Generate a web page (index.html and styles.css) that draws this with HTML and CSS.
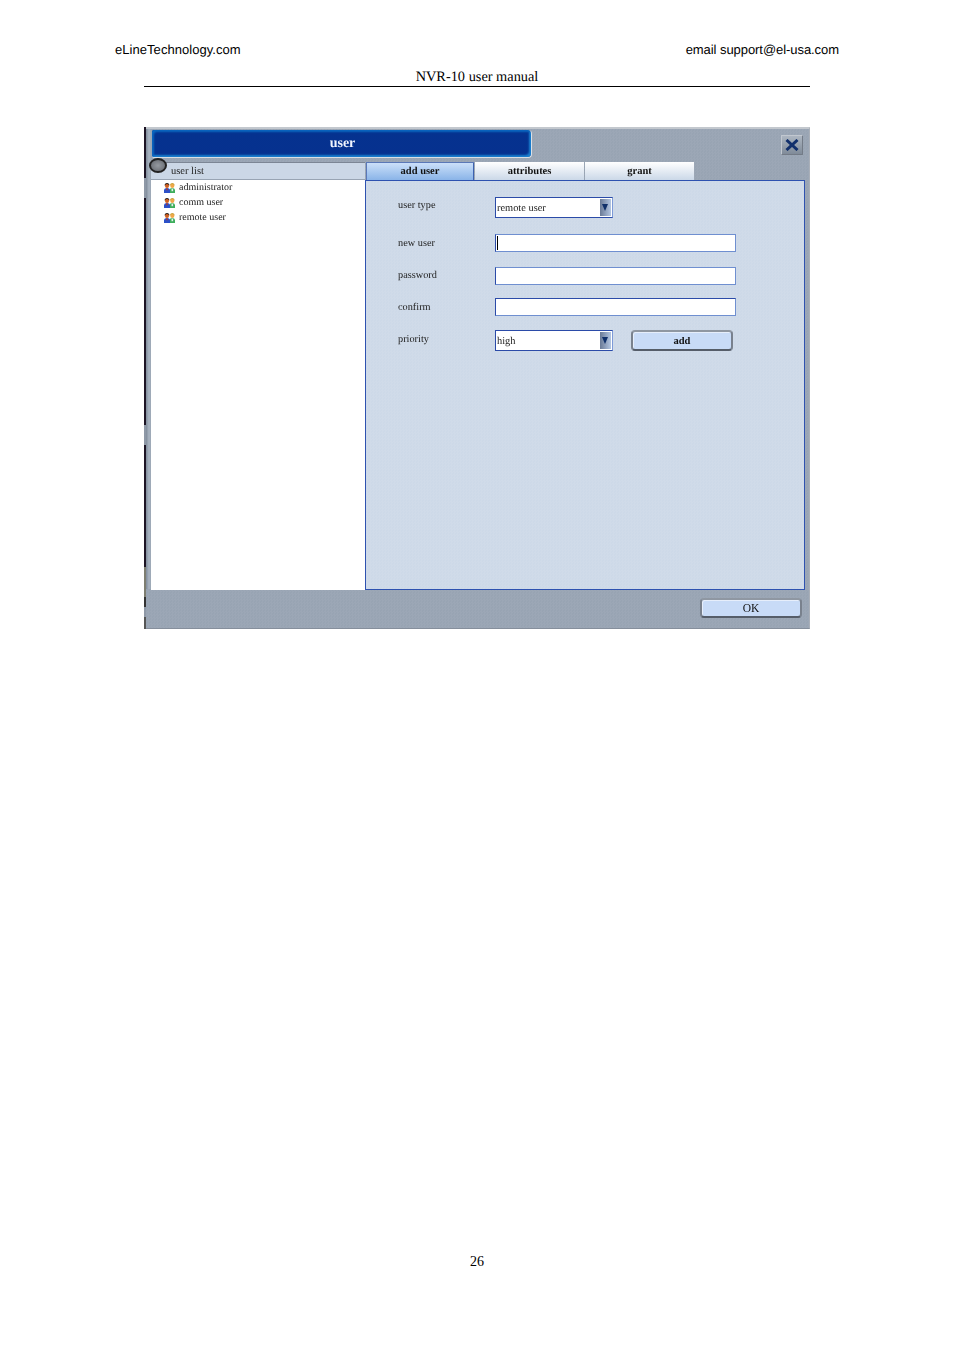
FILE: index.html
```html
<!DOCTYPE html>
<html lang="en">
<head>
<meta charset="utf-8">
<title>NVR-10 user manual</title>
<link rel="stylesheet" href="styles.css">
</head>
<body>
<header class="doc-head">
  <div class="doc-contact"><span class="site">eLineTechnology.com</span><span class="mail">email support@el-usa.com</span></div>
  <div class="doc-title">NVR-10 user manual</div>
</header>
<main class="dialog">
  <div class="title-row">
    <div class="title-bar">user</div>
    <button class="close" aria-label="close">
      <svg viewBox="0 0 14 12" width="14" height="12"><path d="M1.5 1 L12.5 11 M12.5 1 L1.5 11" stroke="#12306c" stroke-width="3" fill="none"/></svg>
    </button>
  </div>
  <div class="body-row">
    <aside class="users">
      <span class="knob"></span>
      <div class="users-head">user list</div>
      <ul class="users-list">
        <li><svg class="uicon" viewBox="0 0 11 10" width="11" height="10"><use href="#group"/></svg>administrator</li>
        <li><svg class="uicon" viewBox="0 0 11 10" width="11" height="10"><use href="#group"/></svg>comm user</li>
        <li><svg class="uicon" viewBox="0 0 11 10" width="11" height="10"><use href="#group"/></svg>remote user</li>
      </ul>
    </aside>
    <section class="main">
      <nav class="tabs">
        <div class="tab active">add user</div>
        <div class="tab">attributes</div>
        <div class="tab">grant</div>
      </nav>
      <div class="panel">
        <div class="row row-type">
          <label>user type</label>
          <div class="select"><span>remote user</span><i class="arrow"></i></div>
        </div>
        <div class="row row-input row-new">
          <label>new user</label>
          <div class="input"><span class="caret"></span></div>
        </div>
        <div class="row row-input row-pass">
          <label>password</label>
          <div class="input"></div>
        </div>
        <div class="row row-input row-confirm">
          <label>confirm</label>
          <div class="input"></div>
        </div>
        <div class="row row-priority">
          <label>priority</label>
          <div class="select"><span>high</span><i class="arrow"></i></div>
          <button class="btn btn-add">add</button>
        </div>
      </div>
    </section>
  </div>
  <div class="foot-row"><button class="btn btn-ok">OK</button></div>
</main>
<footer class="page-num">26</footer>
<svg class="defs" width="0" height="0" aria-hidden="true">
  <defs>
    <g id="group">
      <path d="M6 2.6 A2.3 2.6 0 0 1 10.6 2.6Z" fill="#c9a23c"/>
      <circle cx="8.3" cy="3" r="2" fill="#f0a848"/>
      <path d="M5.4 10 V6.8 Q5.8 5.1 8.2 5.1 Q10.6 5.1 11 6.8 V10Z" fill="#3fae5c"/>
      <rect x="7.5" y="5.6" width="1.6" height="2.6" fill="#dfeeea"/>
      <path d="M0.6 2.6 A2.4 2.6 0 0 1 5.4 2.6Z" fill="#2a1c18"/>
      <circle cx="3" cy="3.1" r="2" fill="#d2601e"/>
      <path d="M0 10 V6.8 Q0.4 5.1 3 5.1 Q5.6 5.1 6 6.8 V10Z" fill="#2c50c8"/>
      <rect x="2.2" y="5.4" width="1.6" height="1.8" fill="#b03828"/>
    </g>
  </defs>
</svg>
</body>
</html>
```
FILE: styles.css
```css
* { box-sizing: border-box; }
html, body { margin: 0; padding: 0; background: #fff; }
body { width: 954px; height: 1350px; font-family: "Liberation Serif", serif; color: #111; overflow: hidden; position: relative; }

.doc-head { padding: 42px 115px 0; }
.doc-contact { display: flex; justify-content: space-between; font: 13px/16px "Liberation Sans", sans-serif; color: #000; text-rendering: geometricPrecision; }
.site { letter-spacing: .05px; }
.mail { letter-spacing: -.06px; }
.doc-title { margin: 11px 29px 0; height: 18px; border-bottom: 1px solid #000; text-align: center; font: 14.35px/16px "Liberation Serif", serif; color: #000; text-rendering: geometricPrecision; }

.dialog {
  width: 666px; height: 502px; margin: 40px 0 0 144px;
  background: #98a4b3 repeating-conic-gradient(rgba(255,255,255,.035) 0 25%, transparent 0 50%) 0 0 / 3px 3px;
  border-top: 2px solid #c3c8ce;
  border-bottom: 1px solid #868f9c;
  border-right: 1px solid #a9afb8;
  display: flex; flex-direction: column;
  position: relative;
  filter: blur(.3px);
  text-rendering: geometricPrecision;
}
.dialog::before { content: ""; position: absolute; left: 0; top: -2px; bottom: -1px; width: 2px;
  background: linear-gradient(#1c1424 0 51px, #8e98a6 51px 71px, #1c1424 71px 298px, #8e98a6 298px 318px, #1c1424 318px 440px, #7d7d70 440px 470px, #333 470px 480px, #8e98a6 480px 490px, #555 490px 100%); }
.dialog::after { content: ""; position: absolute; left: 2px; top: 0; bottom: 39px; width: 5px; background: linear-gradient(90deg, #7f8b9a, #aab5c2 60%, #9aa6b4); }

.title-row { height: 33px; flex: none; display: flex; justify-content: space-between; padding: 1px 6px 0 8px; }
.title-bar {
  width: 380px; height: 28px; border-radius: 2px 4px 4px 2px;
  background: linear-gradient(#05328f, #06318f);
  border-bottom: 1px solid #dbe0e6;
  border-right: 1px solid #dbe0e6;
  box-shadow: inset 3px 3px 2px -1px #0a66c0, inset -3px -3px 2px -1px #1a80d0;
  color: #f2f6ff; font: bold 14px/28px "Liberation Serif", serif; text-align: center; padding-left: 2px;
}
.close {
  width: 22px; height: 20px; margin-top: 5px; padding: 0; display: flex; align-items: center; justify-content: center;
  background: linear-gradient(#adb6c1, #808b99);
  border: 1px solid #737b87; border-top-color: #c2c8d0; border-left-color: #c2c8d0; border-radius: 1px;
}

.body-row { display: flex; flex: none; height: 428px; padding-left: 7px; padding-right: 5px; position: relative; z-index: 1; }
.users { width: 214px; flex: none; position: relative; display: flex; flex-direction: column; border-top: 1px solid #7c8695; }
.knob { position: absolute; left: -2px; top: -5px; width: 18px; height: 15px; border-radius: 50%; background: radial-gradient(#959aa0, #62666c); border: 2.5px solid #222; }
.users-head { height: 17px; padding-left: 20px; background: #cbd7e6; border-bottom: 1px solid #98a4b3; font-size: 10.5px; line-height: 18px; color: #222; }
.users-list { flex: 1; margin: 0; padding: 0 0 0 13px; list-style: none; background: #fff; }
.users-list li { height: 15px; display: flex; align-items: center; gap: 4px; font-size: 10px; line-height: 13px; color: #222; }
.uicon { flex: none; }

.main { width: 440px; flex: none; display: flex; flex-direction: column; }
.tabs { height: 18px; display: flex; gap: 1px; padding-left: 1px; flex: none; }
.tab { width: 109px; height: 18px; text-align: center; font: bold 10.5px/20px "Liberation Serif", serif; color: #111; background: linear-gradient(#fff, #cbd8e8); }
.tab.active { width: 108px; background: linear-gradient(#cfe2fa, #8ab4e8); box-shadow: inset 0 1px 0 #5a78b8, inset 1px 0 0 #5a78b8, inset -1px 0 0 #3e62b0; }
.panel { flex: 1; background: #cdd9e8 repeating-conic-gradient(rgba(255,255,255,.05) 0 25%, transparent 0 50%) 0 0 / 3px 3px; border: 1px solid #2e52b0; padding: 16px 0 0 32px; }

.row { display: flex; align-items: center; }
.row label { width: 97px; flex: none; font-size: 10.3px; color: #222; position: relative; }
.row-type { height: 21px; margin-bottom: 16px; }
.row-type label { top: -2px; }
.row-input { height: 18px; }
.row-new { margin-bottom: 15px; }
.row-pass { margin-bottom: 13px; }
.row-confirm { margin-bottom: 14px; }
.row-pass label { top: -1px; }
.row-priority { height: 21px; }
.row-priority label { top: -1px; }

.select { width: 118px; height: 21px; background: #fff; border: 1px solid #2b4ba8; border-right-color: #7d9ad8; display: flex; align-items: center; justify-content: space-between; padding: 0 0 0 1px; font-size: 10.4px; color: #222; }
.select span { padding-top: 2px; }
.arrow { width: 11px; height: 17px; margin-right: 1px; background: linear-gradient(90deg, #6a7a96, #b3c6e2); position: relative; flex: none; }
.arrow::after { content: ""; position: absolute; left: 2px; top: 5px; border: 3.5px solid transparent; border-top: 7px solid #10306a; border-bottom: 0; }
.input { width: 241px; height: 18px; background: #fff; border: 1px solid #6f8fd0; border-left-color: #2b4ba8; display: flex; align-items: center; padding-left: 1px; }
.row-confirm .input { border-top-color: #2b4ba8; }
.caret { width: 1px; height: 14px; background: #000; }

.btn { height: 20px; padding: 0; font: 10.5px/16px "Liberation Serif", serif; color: #111; background: #c8dbf7; border: 2px solid #79818d; border-bottom-color: #555d69; border-top-color: #8f97a2; border-radius: 4px; box-shadow: inset 1px 1px 0 #e6eefb; }
.btn-add { width: 102px; height: 21px; margin-left: 18px; font-weight: bold; }
.btn-ok { width: 102px; font-size: 11.5px; }
.foot-row { flex: 1; display: flex; justify-content: flex-end; padding: 8px 7px 0 0; position: relative; z-index: 1; }

.page-num { position: absolute; left: 0; width: 954px; top: 1254px; text-align: center; font: 14px/16px "Liberation Serif", serif; color: #000; }
.defs { position: absolute; }
```
